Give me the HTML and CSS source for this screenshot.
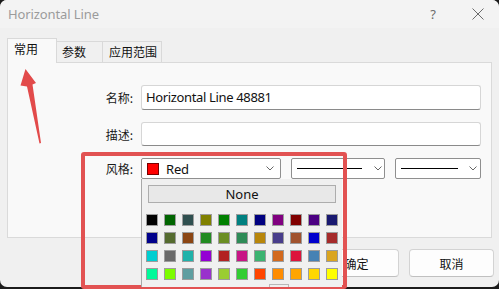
FILE: index.html
```html
<!DOCTYPE html>
<html lang="zh">
<head>
<meta charset="utf-8">
<link rel="stylesheet" href="styles.css">
</head>
<body>
<div class="window">
  <div class="titlebar">
    <span class="title">Horizontal Line</span>
    <span class="help">?</span>
    <svg class="close" width="12" height="12" viewBox="0 0 12 12"><path d="M0.5 0.5 L11.5 11.5 M11.5 0.5 L0.5 11.5" stroke="#6b6b6b" stroke-width="1" fill="none"/></svg>
  </div>
  <div class="content">
    <div class="tabs">
      <div class="tab active">常用</div>
      <div class="tab t2">参数</div>
      <div class="tab t3">应用范围</div>
    </div>
    <div class="panel">
      <div class="form">
        <div class="label">名称:</div>
        <div class="input">Horizontal Line 48881</div>
        <div class="label">描述:</div>
        <div class="input"></div>
        <div class="label">风格:</div>
        <div class="style-row">
          <div class="dd color-dd">
            <span class="red-swatch"></span>
            <span class="dd-text">Red</span>
            <svg class="chev" width="8" height="5" viewBox="0 0 8 5"><path d="M0.5 0.5 L4 4 L7.5 0.5" stroke="#666" fill="none"/></svg>
            <div class="popup">
              <div class="none-btn">None</div>
              <div class="swatches">
                <span class="sw" style="background:#000000"></span>
                <span class="sw" style="background:#006400"></span>
                <span class="sw" style="background:#2f4f4f"></span>
                <span class="sw" style="background:#808000"></span>
                <span class="sw" style="background:#008000"></span>
                <span class="sw" style="background:#008080"></span>
                <span class="sw" style="background:#000080"></span>
                <span class="sw" style="background:#800080"></span>
                <span class="sw" style="background:#800000"></span>
                <span class="sw" style="background:#4b0082"></span>
                <span class="sw" style="background:#191970"></span>
                <span class="sw" style="background:#00008b"></span>
                <span class="sw" style="background:#556b2f"></span>
                <span class="sw" style="background:#8b4513"></span>
                <span class="sw" style="background:#228b22"></span>
                <span class="sw" style="background:#6b8e23"></span>
                <span class="sw" style="background:#2e8b57"></span>
                <span class="sw" style="background:#b8860b"></span>
                <span class="sw" style="background:#483d8b"></span>
                <span class="sw" style="background:#a0522d"></span>
                <span class="sw" style="background:#0000cd"></span>
                <span class="sw" style="background:#a52a2a"></span>
                <span class="sw" style="background:#00ced1"></span>
                <span class="sw" style="background:#696969"></span>
                <span class="sw" style="background:#20b2aa"></span>
                <span class="sw" style="background:#9400d3"></span>
                <span class="sw" style="background:#b22222"></span>
                <span class="sw" style="background:#c71585"></span>
                <span class="sw" style="background:#3cb371"></span>
                <span class="sw" style="background:#d2691e"></span>
                <span class="sw" style="background:#dc143c"></span>
                <span class="sw" style="background:#4682b4"></span>
                <span class="sw" style="background:#daa520"></span>
                <span class="sw" style="background:#00fa9a"></span>
                <span class="sw" style="background:#7cfc00"></span>
                <span class="sw" style="background:#5f9ea0"></span>
                <span class="sw" style="background:#9932cc"></span>
                <span class="sw" style="background:#9acd32"></span>
                <span class="sw" style="background:#32cd32"></span>
                <span class="sw" style="background:#ff4500"></span>
                <span class="sw" style="background:#ff8c00"></span>
                <span class="sw" style="background:#ffa500"></span>
                <span class="sw" style="background:#ffd700"></span>
                <span class="sw" style="background:#ffff00"></span>
              </div>
              <div class="more"></div>
            </div>
          </div>
          <div class="dd line-dd w95">
            <span class="line"></span>
            <svg class="chev" width="8" height="5" viewBox="0 0 8 5"><path d="M0.5 0.5 L4 4 L7.5 0.5" stroke="#666" fill="none"/></svg>
          </div>
          <div class="dd line-dd w86">
            <span class="line"></span>
            <svg class="chev" width="8" height="5" viewBox="0 0 8 5"><path d="M0.5 0.5 L4 4 L7.5 0.5" stroke="#666" fill="none"/></svg>
          </div>
        </div>
      </div>
    </div>
    <div class="buttons">
      <div class="btn">确定</div>
      <div class="btn">取消</div>
    </div>
  </div>
</div>
<svg class="arrow" width="50" height="150" viewBox="0 0 50 150">
  <polygon points="25.5,69 36,83 32.5,84.5 41,143 39.5,143.5 27,86.5 20.5,85.5" fill="#e24a4a"/>
</svg>
<div class="annot"></div>
</body>
</html>
```
FILE: styles.css
```css
* { box-sizing: border-box; }
html, body {
  margin: 0;
  padding: 0;
  width: 499px;
  height: 289px;
  background: #1b1b1b;
  overflow: hidden;
}
body {
  font-family: "Noto Sans", "Noto Sans CJK SC", sans-serif;
  font-size: 12px;
  color: #1a1a1a;
}
.window {
  width: 499px;
  height: 287px;
  background: #f0f0f0;
  border-radius: 7px;
  overflow: hidden;
}
.titlebar {
  height: 28px;
  background: #f3f3f3;
  display: flex;
  align-items: center;
  padding-left: 8px;
}
.title {
  color: #9b9b9b;
  font-size: 13px;
  letter-spacing: -0.1px;
  flex: 1;
}
.help {
  color: #6b6b6b;
  font-size: 13px;
  margin-right: 36px;
}
.close {
  margin-right: 15px;
}
.content {
  padding: 10px 0 0 7px;
}
.tabs {
  display: flex;
  align-items: flex-end;
  height: 24px;
}
.tab {
  font-family: "Noto Sans CJK SC", sans-serif;
  font-size: 12px;
  line-height: 18px;
  border: 1px solid #d9d9d9;
  border-bottom: none;
  background: #f0f0f0;
  height: 21px;
  padding-top: 1px;
  color: #111;
}
.tab.active {
  width: 50px;
  height: 25px;
  margin-bottom: -1px;
  background: #f9f9f9;
  padding-left: 6px;
  padding-top: 1px;
  position: relative;
  z-index: 1;
}
.tab.t2 {
  width: 46px;
  border-left: none;
  padding-left: 5px;
}
.tab.t3 {
  width: 59px;
  border-left: none;
  padding-left: 6px;
}
.panel {
  width: 485px;
  height: 176px;
  border: 1px solid #dadada;
  background: #f9f9f9;
  padding-top: 22px;
}
.form {
  display: grid;
  grid-template-columns: 125px 340px;
  grid-template-rows: 25px 24px 21px;
  column-gap: 8px;
  row-gap: 12px;
  align-items: center;
}
.label {
  font-family: "Noto Sans CJK SC", sans-serif;
  text-align: right;
  font-size: 12px;
  color: #1a1a1a;
}
.input {
  height: 100%;
  background: #fff;
  border: 1px solid #d6d6d6;
  border-bottom-color: #8a8a8a;
  border-radius: 3px;
  padding-left: 4px;
  font-size: 13px;
  letter-spacing: -0.35px;
  line-height: 22px;
  color: #111;
}
.style-row {
  display: flex;
  gap: 10px;
  height: 21px;
}
.dd {
  position: relative;
  height: 21px;
  background: #fff;
  border: 1px solid #8f8f8f;
  border-radius: 2px;
  display: flex;
  align-items: center;
}
.color-dd {
  width: 140px;
  padding-left: 5px;
}
.red-swatch {
  width: 12px;
  height: 12px;
  background: #ff0000;
  border: 1px solid #7a0000;
}
.dd-text {
  font-size: 13px;
  letter-spacing: -0.2px;
  margin-left: 7px;
  flex: 1;
  color: #111;
}
.color-dd .chev {
  margin-right: 6px;
}
.line-dd {
  padding-left: 5px;
}
.w95 { width: 95px; }
.w86 { width: 86px; }
.line {
  width: 65px;
  height: 1px;
  background: #000;
  margin-right: 12px;
}
.w86 .line {
  width: 57px;
  margin-right: 11px;
}
.popup {
  position: absolute;
  left: -1px;
  top: 20px;
  width: 201px;
  height: 120px;
  background: #f0f0f0;
  border-left: 1px solid #a8a8a8;
  padding: 6px 0 0 4px;
  z-index: 5;
}
.none-btn {
  margin-left: 2px;
  width: 188px;
  height: 18px;
  border: 1px solid #adadad;
  background: #e8e8e8;
  text-align: center;
  font-size: 13px;
  line-height: 16px;
  color: #111;
}
.swatches {
  margin-top: 11px;
  display: grid;
  grid-template-columns: repeat(11, 12px);
  grid-auto-rows: 12px;
  gap: 6px;
}
.sw {
  display: block;
  width: 12px;
  height: 12px;
  border: 1px solid #9c9c9c;
}
.more {
  position: absolute;
  left: 127px;
  top: 105px;
  width: 20px;
  height: 12px;
  border: 1px solid #b8b8b8;
}
.buttons {
  display: flex;
  justify-content: flex-end;
  gap: 10px;
  margin-top: 11px;
  padding-right: 5px;
}
.btn {
  width: 85px;
  height: 28px;
  background: #fdfdfd;
  border: 1px solid #d3d3d3;
  border-bottom-color: #c0c0c0;
  border-radius: 4px;
  font-family: "Noto Sans CJK SC", sans-serif;
  font-size: 12px;
  display: flex;
  align-items: center;
  justify-content: center;
  color: #111;
}
.arrow {
  position: absolute;
  left: 0;
  top: 0;
}
.annot {
  position: absolute;
  left: 81px;
  top: 152px;
  width: 266px;
  height: 137px;
  border: 4px solid #e25252;
  border-radius: 3px;
}
```
